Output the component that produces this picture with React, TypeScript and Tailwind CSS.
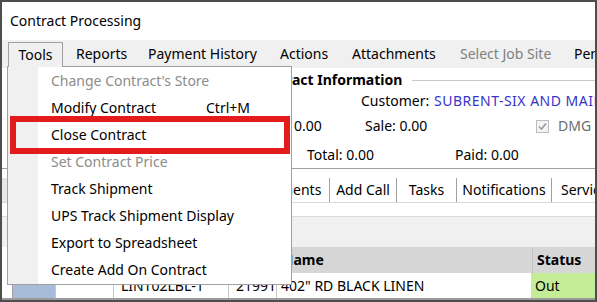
import { Fragment } from 'react';

type MenuEntry = {
  label: string;
  shortcut?: string;
  disabled?: boolean;
};

const toolsMenu: MenuEntry[] = [
  { label: "Change Contract's Store", disabled: true },
  { label: 'Modify Contract', shortcut: 'Ctrl+M' },
  { label: 'Close Contract' },
  { label: 'Set Contract Price', disabled: true },
  { label: 'Track Shipment' },
  { label: 'UPS Track Shipment Display' },
  { label: 'Export to Spreadsheet' },
  { label: 'Create Add On Contract' },
];

const CheckMark = () => (
  <svg width="13" height="13" viewBox="0 0 13 13" className="shrink-0">
    <rect x="0.5" y="0.5" width="12" height="12" fill="#f4f4f4" stroke="#bcbcbc" />
    <path d="M3 6.5 L5.5 9 L10 3.5" fill="none" stroke="#9a9a9a" strokeWidth="1.6" />
  </svg>
);

const App = () => {
  return (
    <div className="w-[597px] h-[302px] overflow-hidden bg-white font-['Noto_Sans',sans-serif] text-[14px] text-black leading-none">
      <div className="relative w-full h-full border-2 border-[#4d4d4d] flex flex-col overflow-hidden">
        {/* title */}
        <div className="h-[38px] shrink-0 flex items-center pl-[8px] bg-white">Contract Processing</div>

        {/* menu bar */}
        <div className="h-[28px] shrink-0 flex items-center bg-[#f0f0f0] whitespace-nowrap">
          <div className="relative z-20 shrink-0 self-start mt-[2px] ml-[6px] w-[55px] h-[25px] flex items-center justify-center border border-b-0 border-[#a0a0a0] bg-[#f0f0f0]">
            Tools
          </div>
          <span className="shrink-0 ml-[13px] w-[72px]">Reports</span>
          <span className="shrink-0 w-[132px]">Payment History</span>
          <span className="shrink-0 w-[72px]">Actions</span>
          <span className="shrink-0 w-[108px]">Attachments</span>
          <span className="shrink-0 w-[114px] text-[#7f7f7f]">Select Job Site</span>
          <span className="shrink-0">Pending</span>
        </div>

        {/* contract form */}
        <div className="flex-1 flex flex-col bg-white whitespace-nowrap">
          <div className="h-[24px] shrink-0 flex items-center pl-[251px]">
            <span className="shrink-0 font-bold">Contract Information</span>
            <div className="flex-1 h-px bg-[#c8c8c8] ml-[10px]" />
          </div>
          <div className="h-[18px] shrink-0 flex items-center pl-[359px]">
            <span className="shrink-0 w-[73px]">Customer:</span>
            <span className="shrink-0 tracking-[0.5px] text-[#3535c8]">SUBRENT-SIX AND MAIN</span>
          </div>
          <div className="h-[32px] shrink-0 flex items-center pl-[292px]">
            <span className="shrink-0 w-[71px]">0.00</span>
            <span className="shrink-0 w-[171px]">Sale: 0.00</span>
            <CheckMark />
            <span className="shrink-0 ml-[9px] text-[#6d6d6d]">DMG</span>
          </div>
          <div className="h-[26px] shrink-0 flex items-center pl-[305px]">
            <span className="shrink-0 w-[148px]">Total: 0.00</span>
            <span className="shrink-0">Paid: 0.00</span>
          </div>
          <div className="h-px shrink-0 bg-[#a0a0a0]" />

          {/* tabs */}
          <div className="h-[33px] shrink-0 flex items-end bg-white">
            <div className="shrink-0 w-[5px] h-[24px] bg-[#e6e6e6]" />
            <div className="shrink-0 w-[223px]" />
            <div className="shrink-0 w-[100px] h-[24px] flex items-center justify-center border-r border-[#a0a0a0]">Attachments</div>
            <div className="shrink-0 w-[67px] h-[24px] flex items-center justify-center border-r border-[#a0a0a0]">Add Call</div>
            <div className="shrink-0 w-[60px] h-[24px] flex items-center justify-center border-r border-[#a0a0a0]">Tasks</div>
            <div className="shrink-0 w-[95px] h-[24px] flex items-center justify-center border-r border-[#a0a0a0]">Notifications</div>
            <div className="shrink-0 h-[24px] flex items-center pl-[9px]">Service</div>
          </div>
          <div className="h-[15px] shrink-0 border-y border-[#dadada] bg-white" />
          <div className="h-[30px] shrink-0 bg-[#f0f0f0]" />

          {/* grid */}
          <div className="h-[26px] shrink-0 flex bg-[#d6d6d6] font-bold">
            <div className="shrink-0 w-[10px] bg-white" />
            <div className="shrink-0 w-[264px] border-l border-[#a0a0a0]" />
            <div className="shrink-0 w-[256px] flex items-center pl-[6px]">Name</div>
            <div className="flex-1 flex items-center pl-[4px] border-l border-[#c4c4c4]">Status</div>
          </div>
          <div className="h-[25px] shrink-0 flex bg-white">
            <div className="shrink-0 w-[10px]" />
            <div className="shrink-0 w-[43px] border-l border-[#a0a0a0] bg-[#a7bcd8] flex items-center justify-end pr-[6px]">
              <div className="w-[2px] h-[2px] bg-[#e02020] -mt-[4px]" />
            </div>
            {[
              { w: 'w-[58px]', t: '' },
              { w: 'w-[115px]', t: 'LINT02LBL-1' },
              { w: 'w-[48px]', t: '21991' },
            ].map((c, i) => (
              <Fragment key={i}>
                <div className={`${c.w} shrink-0 overflow-hidden flex items-center pl-[7px] border-l border-[#c8c8c8]`}>{c.t}</div>
              </Fragment>
            ))}
            <div className="shrink-0 w-[255px] flex items-center pl-[4px] border-l border-[#c8c8c8]">402" RD BLACK LINEN</div>
            <div className="flex-1 flex items-center pl-[4px] bg-[#c5ec97]">Out</div>
          </div>
          <div className="flex-1 bg-[#9a9a9a]" />
        </div>

        {/* tools dropdown */}
        <div className="absolute z-10 left-[5px] top-[64px] w-[285px] h-[219px] flex border border-[#a0a0a0] bg-white whitespace-nowrap">
          <div className="shrink-0 w-[30px] bg-[#f0f0f0]" />
          <div className="flex-1 flex flex-col">
            {toolsMenu.map((item) => (
              <div
                key={item.label}
                className={`h-[27px] flex items-center pl-[13px] ${item.disabled ? 'text-[#8c8c8c]' : 'text-black'}`}
              >
                <span className="shrink-0 w-[155px]">{item.label}</span>
                {item.shortcut && <span className="shrink-0">{item.shortcut}</span>}
              </div>
            ))}
          </div>
        </div>

        {/* highlight */}
        <div className="absolute z-30 left-[8px] top-[114px] w-[280px] h-[38px] border-[6px] border-[#e31b1b]" />
      </div>
    </div>
  );
};

export default App;
